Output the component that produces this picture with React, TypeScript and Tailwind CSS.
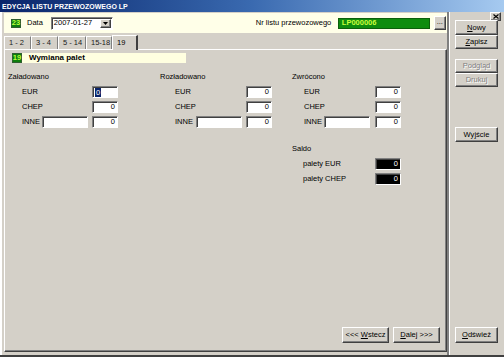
import React from "react"

const raised =
  "bg-[#d4d0c8] border border-t-white border-l-white border-r-[#404040] border-b-[#404040] shadow-[inset_-1px_-1px_#808080]"
const sunken =
  "border border-t-[#808080] border-l-[#808080] border-r-white border-b-white shadow-[inset_1px_1px_#404040]"

function Btn({ children, className = "", disabled = false }: { children: React.ReactNode; className?: string; disabled?: boolean }) {
  return (
    <div
      className={`${raised} shrink-0 flex items-center justify-center ${
        disabled ? "text-[#808080] [text-shadow:1px_1px_#ffffff]" : "text-black"
      } ${className}`}
    >
      {children}
    </div>
  )
}

function Num({ value = "0", focus = false, dark = false }: { value?: string; focus?: boolean; dark?: boolean }) {
  return (
    <div
      className={`${sunken} shrink-0 w-[26px] h-[12px] flex items-center ${
        focus ? "justify-start pl-[2px]" : "justify-end pr-[2px]"
      } ${dark ? "bg-black text-white" : "bg-white text-black"}`}
    >
      {focus ? <span className="bg-[#0a246a] text-white px-[1px] leading-[9px]">{value}</span> : value}
    </div>
  )
}

function TextBox() {
  return <div className={`${sunken} shrink-0 bg-white w-[46px] h-[12px]`} />
}

type ColCfg = {
  title: string
  indent: string
  labelW: string
  inneW: string
  gap: string
  focus?: boolean
}

function PalletColumn({ cfg, children }: { cfg: ColCfg; children?: React.ReactNode }) {
  return (
    <div className="flex flex-col">
      <div className="h-[9px] flex items-center mt-[1px]">{cfg.title}</div>
      <div className={`flex flex-col gap-[3px] mt-[5px] ${cfg.indent}`}>
        <div className="flex items-center h-[12px]">
          <span className={`${cfg.labelW} shrink-0`}>EUR</span>
          <Num focus={cfg.focus} />
        </div>
        <div className="flex items-center h-[12px]">
          <span className={`${cfg.labelW} shrink-0`}>CHEP</span>
          <Num />
        </div>
        <div className="flex items-center h-[12px]">
          <span className={`${cfg.inneW} shrink-0`}>INNE</span>
          <TextBox />
          <div className={`${cfg.gap} shrink-0`} />
          <Num />
        </div>
      </div>
      {children}
    </div>
  )
}

const cols: ColCfg[] = [
  { title: "Załadowano", indent: "pl-[14px]", labelW: "w-[70px]", inneW: "w-[20px]", gap: "w-[4px]", focus: true },
  { title: "Rozładowano", indent: "pl-[15px]", labelW: "w-[71px]", inneW: "w-[21px]", gap: "w-[4px]" },
  { title: "Zwrócono", indent: "pl-[12px]", labelW: "w-[71px]", inneW: "w-[20px]", gap: "w-[5px]" },
]

const tabs = [
  { label: "1 - 2", w: "w-[27px]" },
  { label: "3 - 4", w: "w-[27px]" },
  { label: "5 - 14", w: "w-[28px]" },
  { label: "15-18", w: "w-[26px]" },
]

export default function App() {
  return (
    <div className="w-[504px] h-[357px] bg-[#d4d0c8] flex flex-col overflow-hidden whitespace-nowrap font-['Liberation_Sans',Arial,sans-serif] text-[7.5px] leading-none text-black border-b-2 border-b-[#404040]">
      {/* title bar */}
      <div className="h-[12px] shrink-0 bg-gradient-to-r from-[#0a246a] via-[#3a6ab0] to-[#a6caf0] text-white font-bold text-[7px] flex items-center pl-[2px]">
        EDYCJA LISTU PRZEWOZOWEGO LP
      </div>

      <div className="flex flex-1 min-h-0 border-l-2 border-l-white">
        {/* left side */}
        <div className="w-[445px] shrink-0 flex flex-col pl-[2px] pb-[3px]">
          {/* header strip */}
          <div className="mt-[1px] h-[20px] bg-[#ffffe8] flex items-center">
            <div className="shrink-0 ml-[7px] w-[10px] h-[9px] bg-[#0d7d0d] text-[#b8ff3a] font-bold flex items-center justify-center border border-[#2e5e2e]">
              23
            </div>
            <span className="ml-[6px] shrink-0">Data</span>
            <div className={`${sunken} shrink-0 bg-white ml-[8px] w-[62px] h-[13px] flex items-center pl-[2px]`}>
              <span className="flex-1">2007-01-27</span>
              <div className={`${raised} w-[11px] h-[9px] mr-[1px] flex items-center justify-center`}>
                <svg width="5" height="3" viewBox="0 0 5 3">
                  <path d="M0 0h5L2.5 3z" fill="#000" />
                </svg>
              </div>
            </div>
            <span className="ml-[143px] w-[73px] shrink-0">Nr listu przewozowego</span>
            <div className="shrink-0 ml-[9px] w-[92px] h-[11px] bg-[#0e8c0e] text-[#c8ff3c] font-bold flex items-center pl-[3px] border border-[#0b5f0b]">
              LP000006
            </div>
            <Btn className="ml-[4px] w-[12px] h-[14px]">
              <span className="-mt-[2px]">...</span>
            </Btn>
          </div>

          {/* tabs */}
          <div className="mt-[2px] h-[14px] flex items-end">
            {tabs.map((t) => (
              <div
                key={t.label}
                className={`${t.w} h-[13px] flex items-center pl-[4px] border-t border-l border-t-white border-l-white border-r border-r-[#808080] text-[#202020]`}
              >
                {t.label}
              </div>
            ))}
            <div className="w-[26px] h-[15px] -mb-[1px] flex items-center pl-[4px] border-t border-l border-t-white border-l-white border-r-2 border-r-[#404040] bg-[#d4d0c8] relative z-10">
              19
            </div>
          </div>

          {/* tab panel */}
          <div className="flex-1 flex flex-col border border-t-white border-l-white border-r-[#404040] border-b-[#404040] shadow-[inset_-1px_-1px_#808080] px-[3px]">
            <div className="mt-[3px] ml-[4px] h-[10px] flex items-stretch">
              <div className="w-[10px] bg-[#0d7d0d] text-[#b8ff3a] font-bold flex items-center justify-center border border-[#2e5e2e]">
                19
              </div>
              <div className="w-[164px] bg-[#ffffe0] font-bold flex items-center pl-[7px] text-[8px]">Wymiana palet</div>
            </div>

            <div className="mt-[8px] grid grid-cols-[152px_132px_1fr]">
              <PalletColumn cfg={cols[0]} />
              <PalletColumn cfg={cols[1]} />
              <PalletColumn cfg={cols[2]}>
                <div className="mt-[16px] h-[9px] flex items-center">Saldo</div>
                <div className="mt-[5px] flex flex-col gap-[3px] pl-[11px]">
                  <div className="flex items-center h-[12px]">
                    <span className="w-[72px] shrink-0">palety EUR</span>
                    <Num dark />
                  </div>
                  <div className="flex items-center h-[12px]">
                    <span className="w-[72px] shrink-0">palety CHEP</span>
                    <Num dark />
                  </div>
                </div>
              </PalletColumn>
            </div>

            <div className="flex-1" />
            <div className="flex justify-end gap-[4px] mb-[8px] mr-[3px]">
              <Btn className="w-[47px] h-[16px]">
                &lt;&lt;&lt;&nbsp;<span className="underline">W</span>stecz
              </Btn>
              <Btn className="w-[47px] h-[16px]">
                <span className="underline">D</span>alej &gt;&gt;&gt;
              </Btn>
            </div>
          </div>
        </div>

        {/* right sidebar */}
        <div className="flex-1 flex flex-col border-l-2 border-l-[#808080]">
          <div className="border-l border-l-white flex-1 flex flex-col pl-[5px]">
            <Btn className="self-end mr-[3px] w-[11px] h-[9px]">
              <svg width="6" height="5" viewBox="0 0 6 5">
                <path d="M0.5 0.5L5.5 4.5M5.5 0.5L0.5 4.5" stroke="#000" strokeWidth="1.2" />
              </svg>
            </Btn>
            <Btn className="w-[43px] h-[15px] -mt-[1px]">
              <span className="underline">N</span>owy
            </Btn>
            <Btn className="w-[43px] h-[14px]">
              <span className="underline">Z</span>apisz
            </Btn>
            <Btn className="w-[43px] h-[14px] mt-[10px]" disabled>
              Podgląd
            </Btn>
            <Btn className="w-[43px] h-[14px]" disabled>
              Drukuj
            </Btn>
            <Btn className="w-[43px] h-[15px] mt-[40px]">
              Wy<span className="underline">j</span>ście
            </Btn>
            <div className="flex-1" />
            <Btn className="w-[43px] h-[16px] mb-[12px]">
              <span className="underline">O</span>dśwież
            </Btn>
          </div>
        </div>
      </div>
    </div>
  )
}
